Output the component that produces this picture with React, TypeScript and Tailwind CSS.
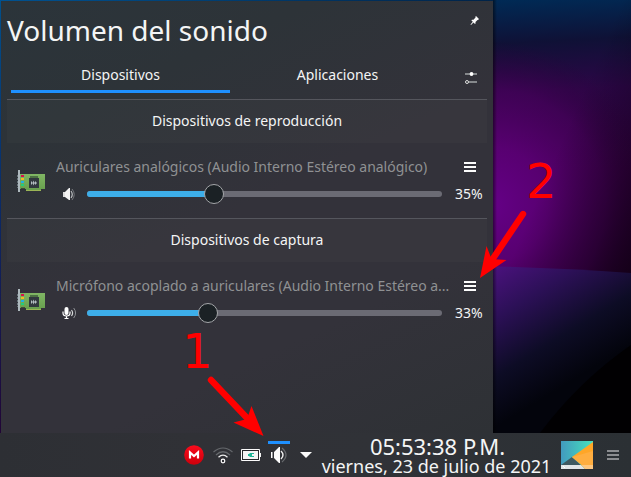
import React from "react";

function SoundCard() {
  return (
    <svg width="28" height="24" viewBox="0 0 28 24" className="shrink-0">
      <defs>
        <linearGradient id="board" x1="0" y1="0" x2="0" y2="1">
          <stop offset="0" stopColor="#80b664" />
          <stop offset="1" stopColor="#669e4c" />
        </linearGradient>
      </defs>
      <path d="M3 5H28V20H24V22H9V20H3Z" fill="url(#board)" />
      <path d="M9 21H24V22H9Z" fill="#9bb556" />
      <path d="M4 19H8V20H4Z" fill="#3d4d38" />
      <path d="M13 7H21V19H13Z" fill="#4c7043" />
      <path d="M12 9H22V19H12Z" fill="#31383e" />
      <path d="M14 12.500H15V15.500H14ZM15 13.500H16V14.500H15ZM16 11.500L18 14L16 16.500ZM18 12.500H19V15.500H18ZM19 13.500H20V14.500H19Z" fill="#b4bdc2" />
      <path d="M4 6H7V8H4Z" fill="#d8124d" />
      <path d="M4 9H7V11H4Z" fill="#f0bd23" />
      <path d="M4 12H7V14H4Z" fill="#25aee4" />
      <path d="M4 15H7V17H4Z" fill="#22cf79" />
      <path d="M0.500 6V19" stroke="#68757b" strokeDasharray="2 1" />
      <path d="M1 1H3V23H1Z" fill="#aeb9be" />
    </svg>
  );
}

function Speaker() {
  return (
    <svg width="14" height="14" viewBox="0 0 14 14" fill="none" className="shrink-0">
      <path d="M1 5H3V10H1Z" fill="#ddd" />
      <path d="M3 5L7 1H8V13H7L3 10Z" fill="#f4f4f4" />
      <path d="M9 4Q11.5 7.5 9 11" stroke="#bfc1c3" strokeWidth="1.2" />
      <path d="M10 2Q14.5 7.5 10 13" stroke="#777a7e" strokeWidth="1" />
    </svg>
  );
}

function Microphone() {
  return (
    <svg width="15" height="14" viewBox="0 0 15 14" fill="none" className="shrink-0">
      <rect x="2.5" y="1" width="4" height="8" rx="2" fill="#fff" />
      <path d="M1 5.5V7Q1 10 4.5 10T8 7V5.5M4.5 10V12.5M2.5 12.5H6.5" stroke="#fff" strokeWidth="1.2" />
      <path d="M9.5 4Q11.7 7 9.5 10" stroke="#d8dadb" strokeWidth="1.2" />
      <path d="M11.7 2Q15.5 7 11.7 12" stroke="#8d9094" />
    </svg>
  );
}

function Burger({ color }: { color: string }) {
  return (
    <svg width="12" height="10" viewBox="0 0 12 10" className="shrink-0">
      <path d="M0 1H12M0 5H12M0 9H12" stroke={color} strokeWidth="2" />
    </svg>
  );
}

function Device({ name, level, knob, mic }: { name: string; level: string; knob: number; mic?: boolean }) {
  return (
    <div className="flex h-[75px] pl-[10px]">
      <div className="flex w-[39px] pt-[26px]">
        <SoundCard />
      </div>
      <div className="flex-1 pt-[14px]">
        <div className="flex h-5 items-center">
          <div className="w-[395px] whitespace-nowrap text-[14px] tracking-[-0.01px] text-[#8f9193]">{name}</div>
          <div className="ml-[13px]">
            <Burger color="#fcfcfc" />
          </div>
        </div>
        <div className="mt-[7px] flex h-5 items-center">
          <div className="flex w-[31px] pl-[6px]">{mic ? <Microphone /> : <Speaker />}</div>
          <div className="relative h-[6px] w-[355px] rounded-full bg-[#6b6b74]">
            <div className="h-[6px] rounded-full bg-[#3daee9]" style={{ width: knob }} />
            <div
              className="absolute -top-[7px] h-5 w-5 -translate-x-1/2 rounded-full border border-[#a4a6a9] bg-[#1b2125]"
              style={{ left: knob }}
            />
          </div>
          <div className="ml-[13px] text-[14px]">{level}</div>
        </div>
      </div>
    </div>
  );
}

function SectionTitle({ children }: { children: React.ReactNode }) {
  return (
    <div className="flex h-11 items-center justify-center border-t border-[#55565d] bg-white/[0.02] pb-[2px] text-[14px]">
      {children}
    </div>
  );
}

function Wallpaper() {
  return (
    <svg className="absolute inset-0" width="631" height="477" viewBox="0 0 631 477">
      <defs>
        <linearGradient id="sky" gradientUnits="userSpaceOnUse" x1="500" y1="0" x2="515" y2="290">
          <stop offset="0" stopColor="#002a55" />
          <stop offset="0.15" stopColor="#0f1136" />
          <stop offset="0.32" stopColor="#2c0647" />
          <stop offset="0.6" stopColor="#360045" />
          <stop offset="1" stopColor="#2d0035" />
        </linearGradient>
        <radialGradient id="violet" gradientUnits="userSpaceOnUse" cx="490" cy="205" r="165">
          <stop offset="0" stopColor="#650087" />
          <stop offset="0.35" stopColor="#5c0076" stopOpacity="0.9" />
          <stop offset="0.7" stopColor="#4a005e" stopOpacity="0.6" />
          <stop offset="1" stopColor="#2c0036" stopOpacity="0" />
        </radialGradient>
        <linearGradient id="shade" gradientUnits="userSpaceOnUse" x1="545" y1="180" x2="650" y2="225">
          <stop offset="0" stopColor="#000" stopOpacity="0" />
          <stop offset="1" stopColor="#000" stopOpacity="0.55" />
        </linearGradient>
        <linearGradient id="lower" gradientUnits="userSpaceOnUse" x1="490" y1="262" x2="565" y2="385">
          <stop offset="0" stopColor="#4f1283" />
          <stop offset="0.35" stopColor="#2c1057" />
          <stop offset="0.7" stopColor="#0d0c25" />
          <stop offset="1" stopColor="#03040c" />
        </linearGradient>
        <linearGradient id="edge" x1="0" x2="1">
          <stop offset="0" stopColor="#000" stopOpacity="0.5" />
          <stop offset="1" stopColor="#000" stopOpacity="0" />
        </linearGradient>
        <linearGradient id="left" x1="0" y1="0" x2="0" y2="1">
          <stop offset="0" stopColor="#00508c" />
          <stop offset="0.5" stopColor="#0b2864" />
          <stop offset="1" stopColor="#210536" />
        </linearGradient>
        <linearGradient id="top" x1="0" x2="1">
          <stop offset="0" stopColor="#005291" />
          <stop offset="1" stopColor="#002348" />
        </linearGradient>
      </defs>
      <path d="M480 0H631V300H480Z" fill="url(#sky)" />
      <path d="M480 0H631V300H480Z" fill="url(#violet)" />
      <path d="M480 0H631V300H480Z" fill="url(#shade)" />
      <path d="M480 266Q560 268 631 273V440H480Z" fill="url(#lower)" />
      <path d="M631 345Q579 381 540 433H631Z" fill="#010002" />
      <path d="M493 0H497V433H493Z" fill="url(#edge)" />
      <path d="M0 0H2V433H0Z" fill="url(#left)" />
      <path d="M0 0H493V2H0Z" fill="url(#top)" />
    </svg>
  );
}

function Annotations() {
  return (
    <div className="absolute inset-0 font-['DejaVu_Sans'] text-[48px] leading-[48px] text-[#ff0000]">
      <span className="absolute left-[182px] top-[327px]">1</span>
      <span className="absolute left-[526px] top-[157px]">2</span>
      <svg className="absolute inset-0" width="631" height="477" viewBox="0 0 631 477" fill="#f00">
        <path d="M211 380L247 418M523 214L492 260" stroke="#f00" strokeWidth="6.4" strokeLinecap="round" />
        <path d="M263.500 436L233.500 422.500L247 419L251.500 406Z" />
        <path d="M480 278L486.500 246L491.500 259L506.500 260Z" />
      </svg>
    </div>
  );
}

function Taskbar() {
  return (
    <div className="relative flex h-11 bg-[linear-gradient(90deg,#2d2f34,#303136_30%,#303237_60%,#2b3034)]">
      <div className="flex h-11 items-center pl-[184px]">
        <svg width="20" height="20" viewBox="0 0 20 20">
          <defs>
            <linearGradient id="mega" x1="0" y1="0" x2="0" y2="1">
              <stop offset="0" stopColor="#fb0b1c" />
              <stop offset="1" stopColor="#cc000b" />
            </linearGradient>
          </defs>
          <circle cx="10" cy="10" r="9.800" fill="url(#mega)" />
          <path d="M6 13.500V7.500L10 11L14 7.500V13.500" fill="none" stroke="#fff" strokeWidth="2.200" />
        </svg>
        <svg className="ml-2" width="22" height="20" viewBox="0 0 22 20" fill="none">
          <path d="M1.500 7Q11 -1 20.500 7M4 10Q11 3.500 18 10" stroke="#65686c" strokeWidth="1.200" />
          <path d="M6.500 12.300Q11 8 15.500 12.300" stroke="#eee" strokeWidth="1.300" />
          <circle cx="11" cy="16" r="1.800" stroke="#fff" strokeWidth="1.200" />
        </svg>
        <svg className="ml-[7px]" width="20" height="14" viewBox="0 0 20 14">
          <path d="M0.500 1.500H18.500V12.500H0.500Z" fill="#26292c" stroke="#fcfcfc" />
          <path d="M2 3H17V11H2ZM19 5H20V9H19Z" fill="#f4f4f4" />
          <path d="M7 6H8L9 5H11V9H9L8 8H7Z" fill="#20b596" />
          <path d="M11 5.500H13M11 8.500H13" stroke="#20b596" />
        </svg>
        <div className="relative ml-[7px] flex h-11 w-[22px] items-center justify-center">
          <div className="absolute left-0 top-2 h-[3px] w-[22px] bg-[#1e90ff]" />
          <svg width="18" height="18" viewBox="0 0 18 18" fill="none">
            <path d="M1 6H2.500V12H1ZM4 6L9 1H10V17H9L4 12Z" fill="#fcfcfc" />
            <path d="M11 5Q15 9 11 13" stroke="#eee" strokeWidth="1.400" />
            <path d="M12 2Q20 9 12 16" stroke="#686b6f" strokeWidth="1.200" />
          </svg>
        </div>
        <svg className="ml-[10px]" width="12" height="8" viewBox="0 0 12 8">
          <path d="M0 1H12L6 7Z" fill="#fcfcfc" />
        </svg>
      </div>
      <div className="ml-[9px] flex w-[231px] flex-col items-center whitespace-nowrap">
        <div className="mt-[3px] h-[21px] pl-[2px] text-[22px] leading-[20px]">05:53:38 P.M.</div>
        <div className="h-5 text-[18px] leading-[19px]">viernes, 23 de julio de 2021</div>
      </div>
      <svg className="ml-[9px] mt-2 shrink-0" width="32" height="28" viewBox="0 0 32 28">
        <defs>
          <linearGradient id="teal" x1="0" x2="1">
            <stop offset="0" stopColor="#429abe" />
            <stop offset="1" stopColor="#46e2bd" />
          </linearGradient>
        </defs>
        <path d="M0 0H32V28H0Z" fill="url(#teal)" />
        <path d="M0 24L11 16L24 28H0Z" fill="#3f5961" />
        <path d="M32 1V28H25L11 16Z" fill="#ffa627" />
        <path d="M11 16L32 10V24H21Z" fill="#ffae40" />
        <path d="M0 24H20L24 28H0Z" fill="#e1e5e7" />
        <path d="M20 24H32V28H24Z" fill="#ffc77f" />
        <path d="M2 25L4 27" stroke="#fff" />
      </svg>
      <div className="ml-[14px] mt-[17px]">
        <Burger color="#8b8d90" />
      </div>
    </div>
  );
}

export default function App() {
  return (
    <div className="relative h-[477px] w-[631px] overflow-hidden bg-black font-['Noto_Sans',sans-serif] leading-5 text-[#f4f5f5]">
      <Wallpaper />
      <div className="relative h-[433px] pl-px pt-px">
        <div className="h-[432px] w-[492px] bg-[linear-gradient(155deg,#2b343a_0%,#2d3338_22%,#33323a_48%,#33323a_72%,#2e3135_100%)] pl-[6px] pr-[6px]">
          <div className="flex h-[54px] justify-between">
            <h1 className="mt-[13px] text-[28px] leading-8">Volumen del sonido</h1>
            <svg className="mr-[7px] mt-[14px]" width="10" height="11" viewBox="0 0 10 11">
              <path d="M6 1L9 4L8 5L7.500 5L5.500 7V8.500L5 9L3.500 7.500L1 10L0.500 9.500L2.800 6.700L1.300 5.200L2 4.700H3.500L5.500 2.500V1.500Z" fill="#fcfcfc" />
            </svg>
          </div>
          <div className="flex h-11">
            <div className="flex w-[227px] flex-col px-1 text-center text-[14px]">
              <div className="flex h-[35px] items-center justify-center pt-[5px]">Dispositivos</div>
              <div className="h-[3px] bg-[#1e90ff]" />
            </div>
            <div className="w-[207px] pt-[10px] text-center text-[14px]">Aplicaciones</div>
            <svg className="ml-[23px] mt-[15px]" width="14" height="16" viewBox="0 0 14 16">
              <path d="M1 4H13M4 12H13" stroke="#85888b" strokeWidth="1.800" />
              <circle cx="7.500" cy="4" r="1.900" fill="#fff" />
              <circle cx="3" cy="12" r="1.500" fill="#303238" stroke="#ddd" />
            </svg>
          </div>
          <SectionTitle>Dispositivos de reproducción</SectionTitle>
          <Device name="Auriculares analógicos (Audio Interno Estéreo analógico)" level="35%" knob={127} />
          <SectionTitle>Dispositivos de captura</SectionTitle>
          <Device name="Micrófono acoplado a auriculares (Audio Interno Estéreo a..." level="33%" knob={121} mic />
        </div>
      </div>
      <Taskbar />
      <Annotations />
    </div>
  );
}
